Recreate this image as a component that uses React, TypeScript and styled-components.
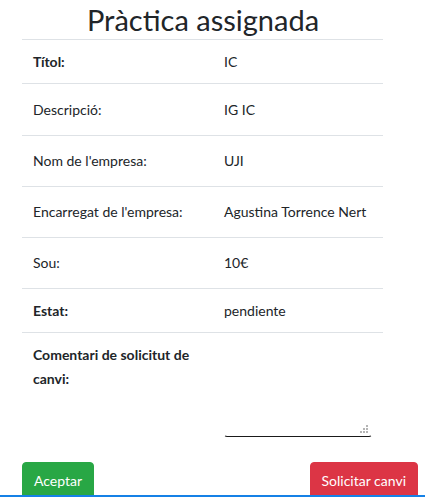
import React from "react";
import styled, { createGlobalStyle } from "styled-components";

const Global = createGlobalStyle`
  html, body { margin: 0; padding: 0; background: #fff; }
  body {
    font-family: "Lato", "Noto Sans", sans-serif;
    font-size: 14px;
    color: #212529;
    overflow: hidden;
  }
  * { box-sizing: border-box; }
`;

const Page = styled.div`
  width: 425px;
  height: 497px;
  padding: 0 7px 0 22px;
  display: flex;
  flex-direction: column;
`;

const Title = styled.h1`
  width: 362px;
  margin: 0;
  padding-top: 1px;
  font-size: 29px;
  font-weight: 400;
  line-height: 38px;
  text-align: center;
  color: #212529;
`;

const Table = styled.div`
  width: 360px;
  display: grid;
  grid-template-columns: 202px 1fr;
`;

const Row = styled.div<{ $h: number }>`
  display: contents;
  & > * {
    border-top: 1px solid #dee2e6;
    height: ${(p) => p.$h}px;
  }
`;

const Label = styled.div<{ $bold?: boolean }>`
  padding: 0 11px;
  display: flex;
  align-items: center;
  font-weight: ${(p) => (p.$bold ? 700 : 400)};
  line-height: 24px;
`;

const Value = styled.div`
  padding: 0 4px 0 0;
  display: flex;
  align-items: center;
  line-height: 24px;
  white-space: nowrap;
`;

const CommentLabel = styled.div`
  border-top: 1px solid #dee2e6;
  padding: 10px 11px 0;
  font-weight: 700;
  line-height: 24px;
  height: 113px;
`;

const CommentCell = styled.div`
  border-top: 1px solid #dee2e6;
  display: flex;
  align-items: flex-end;
  padding: 0 11px 8px 0;
`;

const TextAreaWrap = styled.div`
  position: relative;
  width: 148px;
  height: 40px;
  &::after {
    content: "";
    position: absolute;
    right: 4px;
    bottom: 4px;
    width: 2px;
    height: 2px;
    background: #b5b5b5;
    box-shadow: -3px 0 0 #b5b5b5, -6px 0 0 #b5b5b5, 0 -3px 0 #b5b5b5,
      -3px -3px 0 #b5b5b5, 0 -6px 0 #b5b5b5;
    pointer-events: none;
  }
`;

const TextArea = styled.textarea`
  display: block;
  width: 100%;
  height: 100%;
  resize: none;
  border: 1px solid transparent;
  border-bottom: 1px solid #1a1a1a;
  border-radius: 3px;
  font-family: inherit;
  font-size: 14px;
  outline: none;
  background: transparent;
`;

const Buttons = styled.div`
  width: 396px;
  display: flex;
  justify-content: space-between;
  margin-top: 17px;
`;

const Button = styled.button<{ $variant: "success" | "danger" }>`
  font-family: inherit;
  font-size: 14px;
  line-height: 24px;
  padding: 6px 11px;
  height: 38px;
  border: 1px solid ${(p) => (p.$variant === "success" ? "#28a745" : "#dc3545")};
  background: ${(p) => (p.$variant === "success" ? "#28a745" : "#dc3545")};
  color: #fff;
  border-radius: 4px;
  cursor: pointer;
`;

const FooterEdge = styled.div`
  position: fixed;
  left: 0;
  right: 0;
  top: 495px;
  height: 2px;
  background: #1581e6;
`;

const rows: { label: string; value: string; bold?: boolean; h: number }[] = [
  { label: "Títol:", value: "IC", bold: true, h: 44 },
  { label: "Descripció:", value: "IG IC", h: 52 },
  { label: "Nom de l'empresa:", value: "UJI", h: 51 },
  { label: "Encarregat de l'empresa:", value: "Agustina Torrence Nert", h: 51 },
  { label: "Sou:", value: "10€", h: 51 },
  { label: "Estat:", value: "pendiente", bold: true, h: 44 },
];

export default function App() {
  return (
    <>
      <Global />
      <Page>
        <Title>Pràctica assignada</Title>
        <Table>
          {rows.map((r) => (
            <Row key={r.label} $h={r.h}>
              <Label $bold={r.bold}>{r.label}</Label>
              <Value>{r.value}</Value>
            </Row>
          ))}
          <CommentLabel>Comentari de solicitut de canvi:</CommentLabel>
          <CommentCell>
            <TextAreaWrap>
              <TextArea />
            </TextAreaWrap>
          </CommentCell>
        </Table>
        <Buttons>
          <Button $variant="success">Aceptar</Button>
          <Button $variant="danger">Solicitar canvi</Button>
        </Buttons>
      </Page>
      <FooterEdge />
    </>
  );
}
